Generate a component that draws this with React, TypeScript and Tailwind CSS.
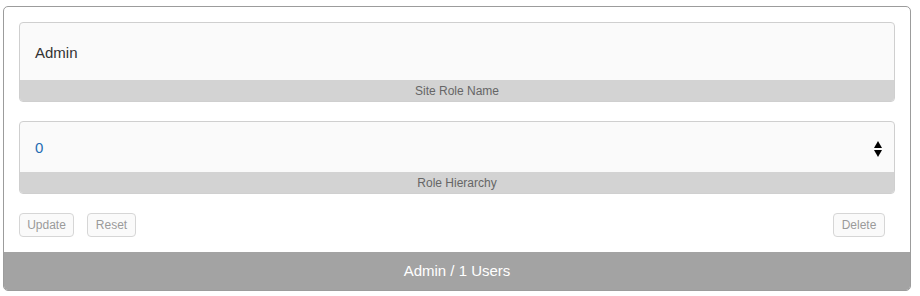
import React from 'react';

const SortArrows: React.FC = () => (
  <svg width="8" height="16" viewBox="0 0 8 16" className="text-black">
    <path d="M4 0 L8 7 L0 7 Z" fill="currentColor" />
    <path d="M0 9 L8 9 L4 16 Z" fill="currentColor" />
  </svg>
);

export default function App() {
  return (
    <div className="pl-[3px] pt-[6px] font-['Liberation_Sans',Arial,sans-serif]">
      <div className="w-[908px] h-[285px] border border-[#9c9c9c] rounded-[5px] bg-white flex flex-col overflow-hidden">
        <div className="flex-1 px-[15px] pt-[15px]">
          {/* site role name */}
          <div className="border border-[#cfcfcf] rounded-[4px] bg-[#fafafa] overflow-hidden">
            <div className="h-[57px] flex items-center pl-[15px] pt-[4px] text-[15px] text-[#333]">Admin</div>
            <div className="h-[21px] bg-[#d3d3d3] flex items-center justify-center text-[12px] text-[#666]">
              Site Role Name
            </div>
          </div>

          {/* role hierarchy */}
          <div className="mt-[19px] border border-[#cfcfcf] rounded-[4px] bg-[#fafafa] overflow-hidden">
            <div className="h-[50px] flex items-center justify-between pl-[15px] pr-[12px] pt-[3px] text-[15px] text-[#1f6db3]">
              <span>0</span>
              <SortArrows />
            </div>
            <div className="h-[21px] bg-[#d3d3d3] flex items-center justify-center text-[12px] text-[#666]">
              Role Hierarchy
            </div>
          </div>

          <div className="mt-[19px] flex items-center justify-between pr-[10px]">
            <div className="flex gap-[13px]">
              <button className="h-[24px] w-[55px] border border-[#d6d6d6] rounded-[4px] bg-[#fafafa] text-[12px] text-[#9a9a9a]">
                Update
              </button>
              <button className="h-[24px] w-[49px] border border-[#d6d6d6] rounded-[4px] bg-[#fafafa] text-[12px] text-[#9a9a9a]">
                Reset
              </button>
            </div>
            <button className="h-[24px] w-[52px] border border-[#d6d6d6] rounded-[4px] bg-[#fafafa] text-[12px] text-[#9a9a9a]">
              Delete
            </button>
          </div>
        </div>

        <div className="h-[38px] bg-[#a3a3a3] flex items-center justify-center text-[15px] text-white">
          Admin / 1 Users
        </div>
      </div>
    </div>
  );
}
